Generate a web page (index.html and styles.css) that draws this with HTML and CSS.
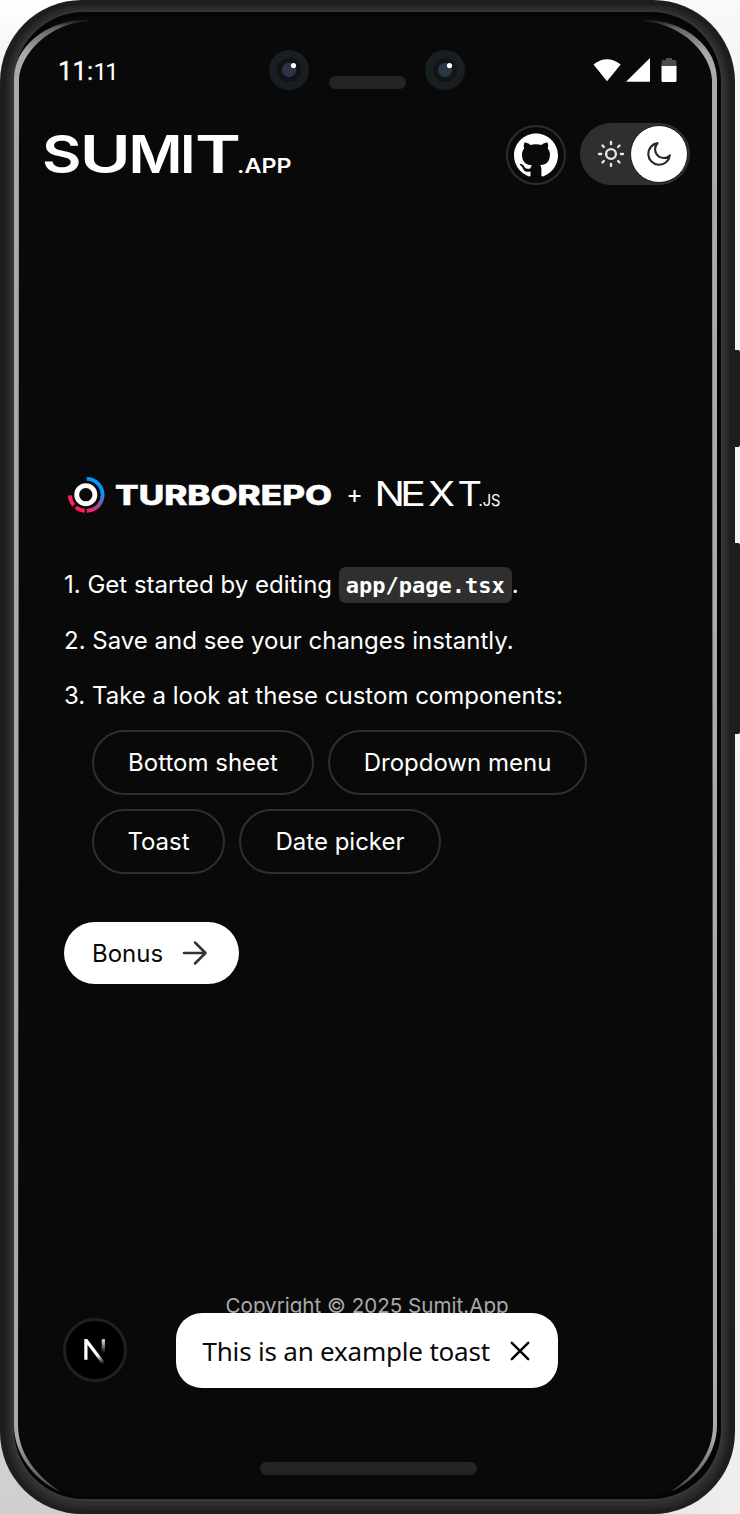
FILE: index.html
```html
<!DOCTYPE html>
<html lang="en">
<head>
<meta charset="utf-8">
<title>Sumit.App</title>
<link rel="stylesheet" href="styles.css">
</head>
<body>
<div class="phone">
  <svg class="frame" width="740" height="1514" viewBox="0 0 740 1514" aria-hidden="true">
    <defs>
      <linearGradient id="shine" x1="0" y1="0" x2="0" y2="1514" gradientUnits="userSpaceOnUse">
        <stop offset=".0125" stop-color="#aaa" stop-opacity="0"/><stop offset=".018" stop-color="#aaa" stop-opacity=".55"/><stop offset=".035" stop-color="#aaa"/><stop offset=".95" stop-color="#aaa"/><stop offset=".988" stop-color="#aaa" stop-opacity=".35"/>
      </linearGradient>
      <pattern id="mesh" width="2" height="2" patternUnits="userSpaceOnUse"><rect width="2" height="2" fill="#1f1f1f"/><path d="M0 0h1v1H0zM1 1h1v1H1z" fill="#282828"/></pattern>
    </defs>
    <path d="M733 350h5q2 0 2 2v93q0 2-2 2h-5zM733 543h5q2 0 2 2v187q0 2-2 2h-5z" fill="#1e1e1d"/>
    <rect width="735" height="1514" rx="82" fill="#1e1e1e"/>
    <rect x="6" y="5" width="723" height="1505" rx="77" fill="#262626"/>
    <rect x="8" y="7" width="719" height="1501" rx="75" fill="#2a2a2a"/>
    <rect x="10" y="9" width="715" height="1496" rx="74" fill="#303030"/>
    <rect x="12" y="10.5" width="711" height="1491" rx="72" fill="#373737"/>
    <rect x="14" y="12" width="707" height="1487" rx="70" fill="#050505"/>
    <rect x="18" y="16" width="696" height="1480" rx="66" fill="#090909"/>
    <path id="edge" d="M88 19C44 21 14 47 14 80V1425C14 1454 34 1480 60 1491.5C37 1476 18 1454 18 1425L19 80C20 54 48 24 88 21Z" fill="url(#shine)"/>
    <use href="#edge" transform="matrix(-1 0 0 1 731 0)"/>
    <rect x="329" y="76" width="77" height="13" rx="6.5" fill="url(#mesh)"/>
    <g id="camera"><circle cx="289" cy="70" r="20" fill="#191e22"/><circle cx="289" cy="70" r="12" fill="#121315"/><circle cx="289" cy="70" r="7.2" fill="#2a3647"/><circle cx="293.5" cy="65.6" r="2.6" fill="#fff"/></g>
    <use href="#camera" x="156"/>
    <rect x="260" y="1462" width="217" height="13" rx="6.5" fill="url(#mesh)"/>
  </svg>

  <div class="status">
    <span class="time">11:<span>11</span></span>
    <svg width="84" height="26" viewBox="593 57 84 26" fill="#fff">
      <path d="M593.5 64.500Q607 54 620.700 64.500L607 81.200Z"/><path d="M626 81.800L650 58V81.800Z"/>
      <path fill="#4d4d4d" d="M661.500 66.500V61.500Q661.500 60 663 60H666V58H672V60H675Q676.500 60 676.500 61.500V66.500Z"/><path d="M661.500 66H676.500V80.500Q676.500 82 675 82H663Q661.500 82 661.500 80.500Z"/>
    </svg>
  </div>

  <header class="header">
    <svg class="brand" width="252" height="64" viewBox="42 123 252 64" fill="#fff">
      <g class="wide" font-size="51.500"><text x="42" y="172.500" textLength="39.500" lengthAdjust="spacingAndGlyphs">S</text><text x="79.700" y="172.500" textLength="51" lengthAdjust="spacingAndGlyphs">U</text><text x="128.500" y="172.500" textLength="54" lengthAdjust="spacingAndGlyphs">M</text><text x="180" y="172.500" textLength="15.500" lengthAdjust="spacingAndGlyphs">I</text><text x="195" y="172.500" textLength="46" lengthAdjust="spacingAndGlyphs">T</text></g>
      <text class="wide-sm" x="237" y="172.500" font-size="19.500" textLength="54.500" lengthAdjust="spacingAndGlyphs">.APP</text>
    </svg>
    <div class="github"><svg width="44" height="44" viewBox="0 0 24 24" fill="#fff"><path d="M12 .297c-6.63 0-12 5.373-12 12 0 5.303 3.438 9.8 8.205 11.385.6.113.82-.258.82-.577 0-.285-.01-1.04-.015-2.04-3.338.724-4.042-1.61-4.042-1.61C4.422 18.07 3.633 17.7 3.633 17.7c-1.087-.744.084-.729.084-.729 1.205.084 1.838 1.236 1.838 1.236 1.07 1.835 2.809 1.305 3.495.998.108-.776.417-1.305.76-1.605-2.665-.3-5.466-1.332-5.466-5.93 0-1.31.465-2.38 1.235-3.22-.135-.303-.54-1.523.105-3.176 0 0 1.005-.322 3.3 1.23.96-.267 1.98-.399 3-.405 1.02.006 2.04.138 3 .405 2.28-1.552 3.285-1.23 3.285-1.23.645 1.653.24 2.873.12 3.176.765.84 1.23 1.91 1.23 3.22 0 4.61-2.805 5.625-5.475 5.92.42.36.81 1.096.81 2.22 0 1.606-.015 2.896-.015 3.286 0 .315.21.69.825.57C20.565 22.092 24 17.592 24 12.297c0-6.627-5.373-12-12-12"/></svg></div>
    <div class="toggle">
      <svg class="sun" width="28" height="28" viewBox="0 0 24 24" fill="none" stroke="#e8e8e8" stroke-width="2" stroke-linecap="round"><circle cx="12" cy="12" r="4.200"/><path d="M12 1.700v1.900M12 20.400v1.900M1.700 12h1.900M20.400 12h1.900M4.700 4.700l1.200 1.300M18.100 18l1.200 1.300M4.700 19.300L5.900 18M18.100 6l1.200-1.300"/></svg>
      <div class="knob"><svg width="28" height="28" viewBox="0 0 24 24" fill="none" stroke="#262626" stroke-width="1.800" stroke-linejoin="round"><path d="M10.800 2.700A9.300 9.300 0 1 0 21.300 13.200A6.300 6.300 0 0 1 10.800 2.700Z"/></svg></div>
    </div>
  </header>

  <main class="main">
    <svg class="logos" width="442" height="44" viewBox="64 473 442 44">
      <defs><linearGradient id="turbo" x1="86" y1="477" x2="86" y2="513" gradientUnits="userSpaceOnUse"><stop offset=".45" stop-color="#0096ff"/><stop offset="1" stop-color="#ff1e56"/></linearGradient></defs>
      <circle cx="85.800" cy="494.700" r="9.100" fill="none" stroke="#fff" stroke-width="4.900"/>
      <path d="M86.700 478.900A15.900 15.900 0 0 1 86.700 510.700" fill="none" stroke="url(#turbo)" stroke-width="3.900"/>
      <path d="M84.800 510.700A15.900 15.900 0 0 1 75.800 507.200M73.700 505.200A15.900 15.900 0 0 1 69.900 495.400" fill="none" stroke="#ff1e56" stroke-width="3.900"/>
      <g fill="#fff">
        <text class="turbo" x="115" y="505.200" font-size="27" textLength="217" lengthAdjust="spacingAndGlyphs">TURBOREPO</text>
        <text class="plus" x="346.300" y="502.700" font-size="25">+</text>
        <g class="next" font-size="34"><text x="374.500" y="506.200" textLength="30.500" lengthAdjust="spacingAndGlyphs">N</text><text x="400" y="506.200" textLength="26" lengthAdjust="spacingAndGlyphs">E</text><text x="428" y="506.200" textLength="27" lengthAdjust="spacingAndGlyphs">X</text><text x="457.500" y="506.200" textLength="24.500" lengthAdjust="spacingAndGlyphs">T</text></g>
        <text class="js" x="478.500" y="506" font-size="15.500" textLength="22" lengthAdjust="spacingAndGlyphs">.JS</text>
      </g>
    </svg>
    <ol class="steps">
      <li>1. Get started by editing <code>app/page.tsx</code>.</li>
      <li>2. Save and see your changes instantly.</li>
      <li>3. Take a look at these custom components:</li>
    </ol>
    <div class="chips">
      <div class="row"><button class="chip sheet">Bottom sheet</button><button class="chip menu">Dropdown menu</button></div>
      <div class="row"><button class="chip toast-btn">Toast</button><button class="chip date">Date picker</button></div>
    </div>
    <button class="bonus">Bonus<svg width="26" height="26" viewBox="0 0 26 26" fill="none" stroke="#333" stroke-width="2.500" stroke-linecap="round" stroke-linejoin="round"><path d="M2 13H23M13 2.500L23.500 13L13 23.500"/></svg></button>
  </main>

  <footer class="footer">Copyright © 2025 Sumit.App</footer>

  <div class="badge"><svg width="26" height="30" viewBox="0 0 24 28" fill="none"><defs><linearGradient id="fadeA" x1="10" y1="14" x2="21" y2="26" gradientUnits="userSpaceOnUse"><stop offset=".4" stop-color="#fff"/><stop offset="1" stop-color="#fff" stop-opacity="0"/></linearGradient><linearGradient id="fadeB" x1="0" y1="3" x2="0" y2="17" gradientUnits="userSpaceOnUse"><stop stop-color="#fff"/><stop offset="1" stop-color="#fff" stop-opacity="0"/></linearGradient></defs><path d="M3.500 23V5.300H4L20.500 27" stroke="url(#fadeA)" stroke-width="3"/><path d="M19.800 4V17" stroke="url(#fadeB)" stroke-width="3"/></svg></div>
  <div class="toast"><span>This is an example toast</span><svg width="20" height="20" viewBox="0 0 20 20" stroke="#000" stroke-width="2.400" stroke-linecap="round"><path d="M1.800 1.800L18.200 18.200M18.200 1.800L1.800 18.200"/></svg></div>
</div>
</body>
</html>
```
FILE: styles.css
```css
* { box-sizing: border-box; }
body { margin: 0; background: #fff; font-family: Inter, "Liberation Sans", sans-serif; color: #fff; }
button { font: inherit; margin: 0; }
svg { display: block; flex: none; overflow: visible; }
.phone { position: relative; width: 740px; height: 1514px; overflow: hidden; background: linear-gradient(90deg, transparent 60%, #f7f7f7cc), linear-gradient(180deg, #fff 0, #f0f0f0 80px, #e6e6e6 900px, #cfcfcf 1514px); }
.frame { position: absolute; inset: 0; }
.status, .header, .main, .footer { position: relative; }
.status { display: flex; justify-content: space-between; height: 115px; padding: 57px 63px 0 58px; }
.time { font: 400 25.500px/28px Roboto, sans-serif; letter-spacing: .2px; -webkit-text-stroke: .35px #fff; }
.time span { font-size: 24px; letter-spacing: -1.700px; -webkit-text-stroke: 0; }
.header { display: flex; height: 80px; padding: 8px 50px 0 42px; }
.wide { font-family: Inter, sans-serif; font-weight: 600; }
.wide-sm { font-family: Inter, sans-serif; font-weight: 600; }
.turbo { font-family: Inter, sans-serif; font-weight: 800; stroke: #fff; stroke-width: .5px; }
.plus { font-family: Inter, sans-serif; font-weight: 400; }
.next { font-family: Inter, sans-serif; font-weight: 400; }
.js { font-family: Inter, sans-serif; font-weight: 400; }
.github { display: grid; place-items: center; width: 60px; height: 60px; margin: 1.500px 14px 0 auto; border: 2px solid #2d2d2d; border-radius: 50%; }
.toggle { display: flex; align-items: center; width: 110px; height: 62px; padding: 0 1px 0 16px; border: 1px solid #303030; border-radius: 31px; background: #2f2f2f; }
.knob { display: grid; place-items: center; width: 58px; height: 58px; margin-left: auto; border: 1.500px solid #181818; border-radius: 50%; background: #fff; }
.main { display: flex; flex-direction: column; align-items: flex-start; padding: 278px 0 0 64px; font-size: 24px; }
.steps { margin: 47px 0 0; padding: 0; list-style: none; }
.steps li { height: 42px; margin-bottom: 14px; line-height: 42px; white-space: pre; }
.steps li:last-child { margin: -1px 0 0; }
.steps code { display: inline-block; height: 36px; margin-top: 3px; padding: 0 7px; border-radius: 7px; background: #2f2f2f; vertical-align: top; font: 700 22px/37px "DejaVu Sans Mono", monospace; }
.chips { display: grid; gap: 14px; margin: 13px 0 0 28px; }
.row { display: flex; gap: 14px; }
.chip { height: 65px; padding: 0; border: 2px solid #2f2f2f; border-radius: 33px; background: none; color: #fff; white-space: nowrap; }
.sheet { width: 222px; }
.menu { width: 259px; }
.toast-btn { width: 133px; }
.date { width: 202px; }
.bonus { display: flex; align-items: center; gap: 19px; width: 175px; height: 62px; margin-top: 48px; padding: 0 0 0 28px; border: 0; border-radius: 31px; background: #fff; color: #0a0a0a; }
.footer { margin-top: 307px; padding-left: 225.500px; color: #aaa; font-size: 20.600px; line-height: 30px; white-space: nowrap; }
.badge { position: absolute; left: 63px; top: 1318px; display: grid; place-items: center; width: 64px; height: 64px; border: 3px solid #202020; border-radius: 50%; background: #000; }
.toast { position: absolute; left: 175.500px; top: 1313px; display: flex; align-items: center; justify-content: space-between; width: 382.500px; height: 75px; padding: 0 28px 0 27px; border-radius: 26px; background: #fff; color: #0a0a0a; font: 26px/36px "Noto Sans", sans-serif; letter-spacing: -.2px; white-space: nowrap; }
```
